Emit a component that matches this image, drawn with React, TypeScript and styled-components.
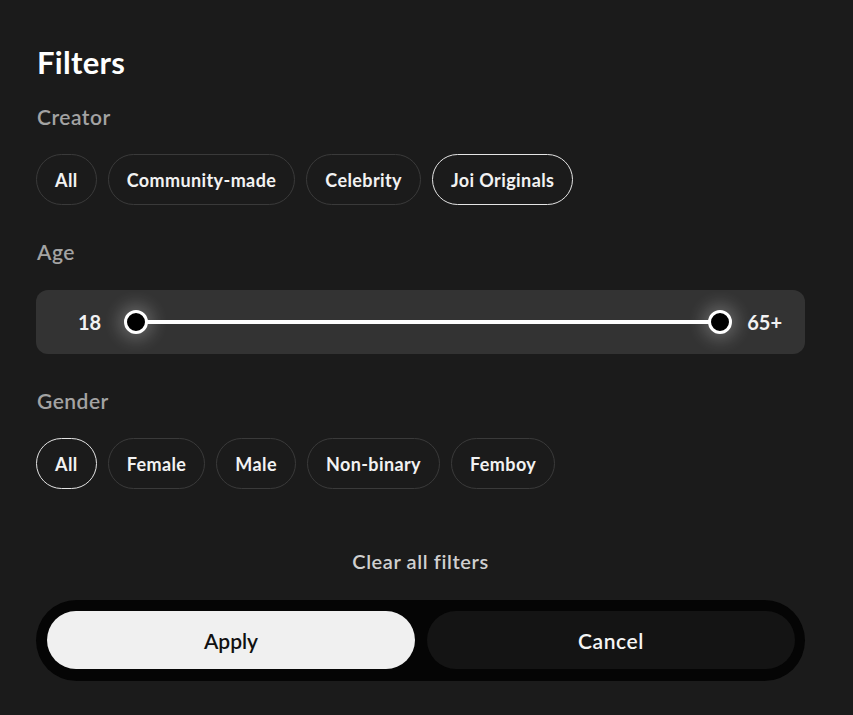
import React, { useState } from 'react';
import styled, { createGlobalStyle } from 'styled-components';

const GlobalStyle = createGlobalStyle`
  html, body {
    margin: 0;
    padding: 0;
    background: #1b1b1b;
  }
  body {
    font-family: Lato, "Open Sans", sans-serif;
    color: #f2f2f2;
  }
`;

const Panel = styled.div`
  width: 853px;
  height: 715px;
  box-sizing: border-box;
  padding: 42px 48px 0 36px;
  background: #1b1b1b;
  display: flex;
  flex-direction: column;
`;

const Title = styled.h1`
  margin: 0 0 0 1px;
  font-size: 31px;
  line-height: 40px;
  font-weight: 700;
  letter-spacing: 0.3px;
  color: #ffffff;
`;

const Label = styled.div<{ $top: number }>`
  margin: ${p => p.$top}px 0 0 1px;
  font-size: 21px;
  line-height: 26px;
  font-weight: 600;
  letter-spacing: 0.5px;
  color: #a3a3a3;
`;

const ChipRow = styled.div`
  display: flex;
  gap: 11px;
  margin-top: 24px;
`;

const Chip = styled.button<{ $active?: boolean }>`
  height: 51px;
  padding: 0 18px;
  border-radius: 26px;
  border: 1px solid ${p => (p.$active ? '#e4e4e4' : '#3a3a3a')};
  background: transparent;
  color: #f2f2f2;
  font-family: inherit;
  font-size: 18px;
  letter-spacing: 0.4px;
  font-weight: 700;
  cursor: pointer;
`;

const SliderBox = styled.div`
  margin-top: 25px;
  height: 64px;
  border-radius: 12px;
  background: #333333;
  display: flex;
  align-items: center;
  padding: 0 23px 0 42px;
`;

const RangeValue = styled.span`
  font-size: 20px;
  font-weight: 700;
  color: #f2f2f2;
  min-width: 26px;
`;

const Track = styled.div`
  position: relative;
  flex: 1;
  height: 4px;
  background: #ffffff;
  margin: 0 26px 0 31px;
  border-radius: 2px;
`;

const Thumb = styled.span<{ $side: 'left' | 'right' }>`
  position: absolute;
  top: 50%;
  ${p => p.$side}: -11px;
  width: 18px;
  height: 18px;
  margin-top: -12px;
  border-radius: 50%;
  background: #000;
  border: 3px solid #fff;
  box-shadow: 0 0 16px 6px rgba(255, 255, 255, 0.22);
`;

const ClearLink = styled.button`
  align-self: center;
  margin: 60px 0 0 0;
  background: none;
  border: none;
  font-family: inherit;
  font-size: 20px;
  letter-spacing: 0.6px;
  font-weight: 600;
  color: #d0d0d0;
  cursor: pointer;
  padding: 0;
`;

const ActionBar = styled.div`
  margin-top: 27px;
  height: 81px;
  box-sizing: border-box;
  border-radius: 41px;
  background: #050505;
  padding: 11px 10px 12px 11px;
  display: grid;
  grid-template-columns: 1fr 1fr;
  gap: 12px;
`;

const ActionButton = styled.button<{ $primary?: boolean }>`
  border: none;
  border-radius: 29px;
  background: ${p => (p.$primary ? '#f0f0f0' : '#141414')};
  color: ${p => (p.$primary ? '#111' : '#f5f5f5')};
  font-family: inherit;
  font-size: 21px;
  letter-spacing: ${p => (p.$primary ? '0' : '0.6px')};
  font-weight: 600;
  cursor: pointer;
`;

const creators = ['All', 'Community-made', 'Celebrity', 'Joi Originals'];
const genders = ['All', 'Female', 'Male', 'Non-binary', 'Femboy'];

export default function App() {
  const [creator, setCreator] = useState('Joi Originals');
  const [gender, setGender] = useState('All');

  return (
    <>
      <GlobalStyle />
      <Panel>
        <Title>Filters</Title>
        <Label $top={22}>Creator</Label>
        <ChipRow>
          {creators.map(c => (
            <Chip key={c} $active={creator === c} onClick={() => setCreator(c)}>
              {c}
            </Chip>
          ))}
        </ChipRow>
        <Label $top={34}>Age</Label>
        <SliderBox>
          <RangeValue>18</RangeValue>
          <Track>
            <Thumb $side="left" />
            <Thumb $side="right" />
          </Track>
          <RangeValue>65+</RangeValue>
        </SliderBox>
        <Label $top={34}>Gender</Label>
        <ChipRow>
          {genders.map(g => (
            <Chip key={g} $active={gender === g} onClick={() => setGender(g)}>
              {g}
            </Chip>
          ))}
        </ChipRow>
        <ClearLink>Clear all filters</ClearLink>
        <ActionBar>
          <ActionButton $primary>Apply</ActionButton>
          <ActionButton>Cancel</ActionButton>
        </ActionBar>
      </Panel>
    </>
  );
}
